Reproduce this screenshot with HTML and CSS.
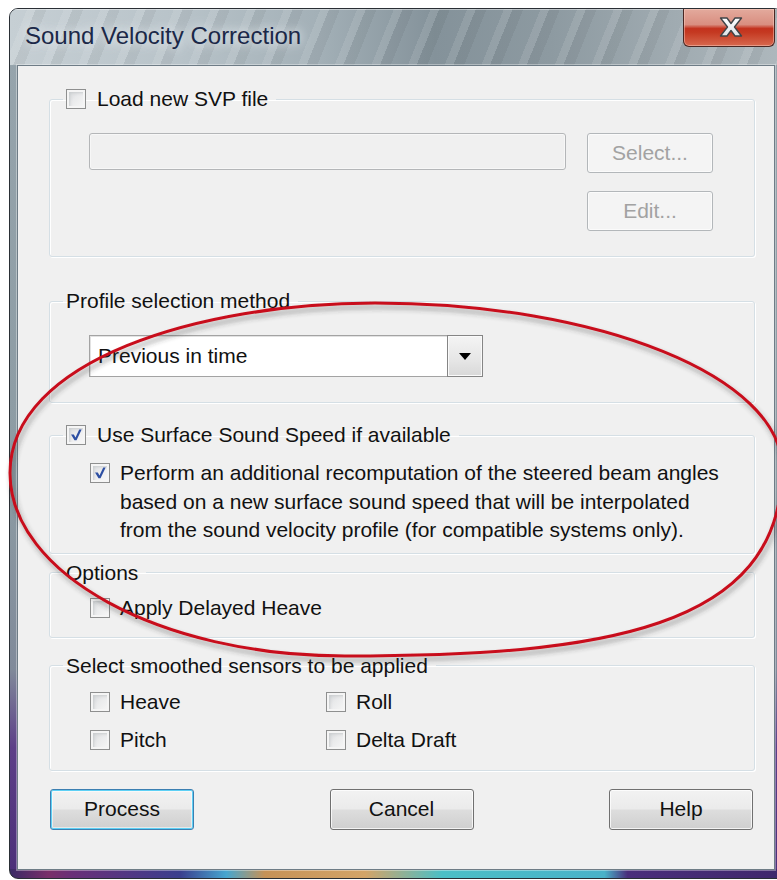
FILE: index.html
```html
<!DOCTYPE html>
<html lang="en">
<head>
<meta charset="utf-8">
<title>Sound Velocity Correction</title>
<link rel="stylesheet" href="styles.css">
</head>
<body>
<div class="window">
  <div class="titlebar">
    <span class="title">Sound Velocity Correction</span>
    <button class="close" type="button" aria-label="Close">
      <svg width="24" height="20" viewBox="0 0 24 20" aria-hidden="true">
        <defs>
          <linearGradient id="xfill" x1="0" y1="0" x2="0" y2="1">
            <stop offset="0" stop-color="#ffffff"/>
            <stop offset="1" stop-color="#dde2e8"/>
          </linearGradient>
        </defs>
        <polygon points="1.5,1 8,1 12,6.5 16,1 22.5,1 15.5,10 22.5,19 16,19 12,13.5 8,19 1.5,19 8.5,10" fill="url(#xfill)" stroke="#404448" stroke-width="1.4" stroke-linejoin="round"/>
      </svg>
    </button>
  </div>

  <div class="client">
    <fieldset class="group g-svp">
      <legend><span class="lg"><span class="check"></span>Load new SVP file</span></legend>
      <div class="svp-body">
        <div class="field"></div>
        <button class="btn disabled" type="button">Select...</button>
        <button class="btn disabled edit" type="button">Edit...</button>
      </div>
    </fieldset>

    <fieldset class="group g-profile">
      <legend><span class="lg">Profile selection method</span></legend>
      <div class="profile-body">
        <div class="combo">
          <span class="combo-value">Previous in time</span>
          <span class="combo-arrow"><span class="tri"></span></span>
        </div>
      </div>
    </fieldset>

    <fieldset class="group g-surface">
      <legend><span class="lg"><span class="check on"><svg viewBox="0 0 20 20" width="18" height="18"><path d="M4.5 9.5 H7.6 L9.4 12.8 L13.6 3.8 H16.3 L10.6 15.8 H8.3 Z" fill="#2d4fa3"/></svg></span>Use Surface Sound Speed if available</span></legend>
      <div class="surface-body">
        <span class="check on"><svg viewBox="0 0 20 20" width="18" height="18"><path d="M4.5 9.5 H7.6 L9.4 12.8 L13.6 3.8 H16.3 L10.6 15.8 H8.3 Z" fill="#2d4fa3"/></svg></span>
        <p class="surface-text">Perform an additional recomputation of the steered beam angles based on a new surface sound speed that will be interpolated from the sound velocity profile (for compatible systems only).</p>
      </div>
    </fieldset>

    <fieldset class="group g-options">
      <legend><span class="lg">Options</span></legend>
      <div class="options-body">
        <label class="opt"><span class="check"></span>Apply Delayed Heave</label>
      </div>
    </fieldset>

    <fieldset class="group g-sensors">
      <legend><span class="lg">Select smoothed sensors to be applied</span></legend>
      <div class="sensors-body">
        <label class="opt"><span class="check"></span>Heave</label>
        <label class="opt"><span class="check"></span>Roll</label>
        <label class="opt"><span class="check"></span>Pitch</label>
        <label class="opt"><span class="check"></span>Delta Draft</label>
      </div>
    </fieldset>

    <div class="actions">
      <button class="btn default" type="button">Process</button>
      <button class="btn" type="button">Cancel</button>
      <button class="btn" type="button">Help</button>
    </div>
  </div>
</div>

<svg class="annotation" width="777" height="880" viewBox="0 0 777 880" aria-hidden="true">
  <defs>
    <filter id="drop" x="-5%" y="-10%" width="115%" height="130%">
      <feDropShadow dx="2" dy="4" stdDeviation="2.5" flood-color="#333" flood-opacity="0.45"/>
    </filter>
  </defs>
  <path d="M10 473 C10 360 200 303 375 303 C600 303 782 377 782 468 C782 630 600 656 345 656 C160 656 10 574 10 473 Z"
        fill="none" stroke="#c8111c" stroke-width="3" filter="url(#drop)"/>
</svg>
</body>
</html>
```

FILE: styles.css
```css
* { box-sizing: border-box; }

html, body { margin: 0; }

body {
  position: relative;
  width: 777px;
  height: 880px;
  overflow: hidden;
  background: #ffffff;
  font-family: "Liberation Sans", Arial, sans-serif;
  font-size: 21px;
  color: #111;
}

/* ---- window frame ---- */
.window {
  margin: 8px 0 0 9px;
  width: 774px;
  height: 871px;
  border: 1px solid #2a2f35;
  border-radius: 9px 9px 0 9px;
  display: flex;
  flex-direction: column;
  overflow: hidden;
  background:
    linear-gradient(90deg, #3a2a66 0%, #7a2f6a 5%, #6a2f78 8%, #3b3e8e 22%, #46a6cf 28%, #c69257 33%, #d3a468 46%, #4bbfc6 56%, #49b2c9 77%, #4a2e7c 80%, #3f286c 100%) left bottom / 100% 9px no-repeat,
    linear-gradient(180deg, #97a5ad 0%, #8c9ba3 55%, #808a9a 76%, #5d3f88 85%, #4b2f78 100%);
}

.titlebar {
  flex: none;
  height: 56px;
  display: flex;
  align-items: flex-start;
  padding-left: 15px;
  box-shadow: inset 0 1px 0 rgba(255, 255, 255, 0.45);
  background:
    repeating-linear-gradient(112deg, rgba(255,255,255,0) 0 16px, rgba(255,255,255,0.10) 16px 24px, rgba(0,0,0,0.05) 24px 34px),
    linear-gradient(90deg, #c6cfd4 0%, #b8c3c9 22%, #a3b0b7 40%, #84929a 55%, #8d9aa1 70%, #a0abb1 86%, #aeb8bd 100%);
}

.title {
  align-self: center;
  font-size: 24px;
  color: #1b2848;
  text-shadow: 0 0 8px #e4eaee, 0 0 14px #dce3e7;
  margin-top: -2px;
}

.close {
  margin-left: auto;
  margin-right: 7px;
  width: 92px;
  height: 38px;
  padding: 0;
  border: 1px solid #4a2723;
  border-top: none;
  border-radius: 0 0 6px 6px;
  background: linear-gradient(180deg, #e3aa9d 0%, #d98e80 42%, #c3311d 53%, #c53a22 64%, #d7694f 100%);
  box-shadow: inset 0 0 0 1px rgba(255, 215, 205, 0.45);
  display: flex;
  align-items: center;
  justify-content: center;
}

.close svg { margin-left: 4px; margin-top: -2px; }

/* ---- client area ---- */
.client {
  flex: 1;
  margin: 0 7px 8px 7px;
  border: 1px solid #6e7c86;
  background: #f0f0f0;
  box-shadow: 0 0 0 1px rgba(255, 255, 255, 0.35);
  display: flex;
  flex-direction: column;
}

.group {
  margin: 0 19px 0 31px;
  padding: 0;
  min-width: 0;
  border: 1px solid #d5dfe5;
  border-radius: 3px;
  box-shadow: inset 1px 1px 0 #ffffff, 1px 1px 0 #ffffff;
}

.group > legend {
  margin-left: 13px;
  padding: 0 8px 0 3px;
  height: 24px;
  line-height: 24px;
}

.lg {
  display: flex;
  align-items: center;
  gap: 11px;
  white-space: nowrap;
}

.g-svp { margin-top: 21px; }
.g-profile { margin-top: 32px; }
.g-surface { margin-top: 20px; }
.g-options { margin-top: 7px; }
.g-sensors { margin-top: 16px; }

/* ---- checkboxes ---- */
.check {
  flex: none;
  width: 20px;
  height: 20px;
  border: 1px solid #8e8f8f;
  background: linear-gradient(135deg, #cfd2d5 0%, #e9eaeb 45%, #f7f7f7 100%);
  box-shadow: inset 0 0 0 2px #f5f5f5, inset 3px 3px 3px #c9ccce;
  display: flex;
  align-items: center;
  justify-content: center;
}

.check.on {
  background: linear-gradient(135deg, #d9dcdf 0%, #eeeeef 50%, #f8f8f8 100%);
}

.check.on svg { display: block; }

.opt {
  display: flex;
  align-items: center;
  gap: 10px;
  height: 24px;
  line-height: 24px;
  white-space: nowrap;
}

/* ---- SVP file group ---- */
.svp-body {
  display: grid;
  grid-template-columns: 477px 126px;
  column-gap: 21px;
  row-gap: 18px;
  align-items: start;
  padding: 22px 0 25px 39px;
}

.field {
  height: 37px;
  border: 1px solid #b4b6b8;
  border-radius: 3px;
  background: #f0f0f0;
  box-shadow: inset 0 0 0 1px #f7f7f7;
}

.edit { grid-column: 2; }

/* ---- buttons ---- */
.btn {
  font: inherit;
  color: #111;
  height: 40px;
  padding: 0;
  border: 1px solid #707070;
  border-radius: 3px;
  background: linear-gradient(180deg, #f2f2f2 0%, #ebebeb 48%, #dddddd 52%, #cfcfcf 100%);
  box-shadow: inset 0 0 0 1px rgba(255, 255, 255, 0.75);
}

.btn.disabled {
  color: #a2a2a2;
  border-color: #b3b7ba;
  background: #f4f4f4;
  box-shadow: inset 0 0 0 1px #fbfbfb;
}

.btn.default {
  border-color: #3c7fb1;
  box-shadow: inset 0 0 0 1px #5ed0f5, inset 0 0 0 2px rgba(255, 255, 255, 0.5);
}

/* ---- profile combo ---- */
.profile-body { padding: 22px 0 25px 39px; }

.combo {
  width: 394px;
  height: 42px;
  display: flex;
  border: 1px solid #a3a3a3;
  background: #ffffff;
  box-shadow: inset 1px 1px 0 #e2e2e2;
}

.combo-value {
  flex: 1;
  padding-left: 8px;
  line-height: 40px;
}

.combo-arrow {
  width: 36px;
  margin: -1px -1px -1px 0;
  border: 1px solid #858585;
  background: linear-gradient(180deg, #f4f4f4 0%, #e6e6e6 60%, #d8d8d8 100%);
  box-shadow: inset 0 0 0 1px #fafafa;
  display: flex;
  align-items: center;
  justify-content: center;
}

.tri {
  width: 0;
  height: 0;
  border-left: 6px solid transparent;
  border-right: 6px solid transparent;
  border-top: 7px solid #000;
}

/* ---- surface sound speed ---- */
.surface-body {
  display: flex;
  align-items: flex-start;
  gap: 10px;
  padding: 12px 0 8px 40px;
}

.surface-body .check { margin-top: 4px; }

.surface-text {
  margin: 0;
  max-width: 612px;
  line-height: 28.5px;
}

/* ---- options / sensors ---- */
.options-body { padding: 11px 0 17px 40px; }

.sensors-body {
  display: grid;
  grid-template-columns: 236px auto;
  row-gap: 14px;
  padding: 12px 0 18px 40px;
}

/* ---- dialog buttons ---- */
.actions {
  display: flex;
  justify-content: space-between;
  margin: 18px 21px 0 32px;
}

.actions .btn {
  width: 144px;
  height: 41px;
}

/* ---- red annotation ring ---- */
.annotation {
  position: absolute;
  left: 0;
  top: 0;
  pointer-events: none;
}
```
